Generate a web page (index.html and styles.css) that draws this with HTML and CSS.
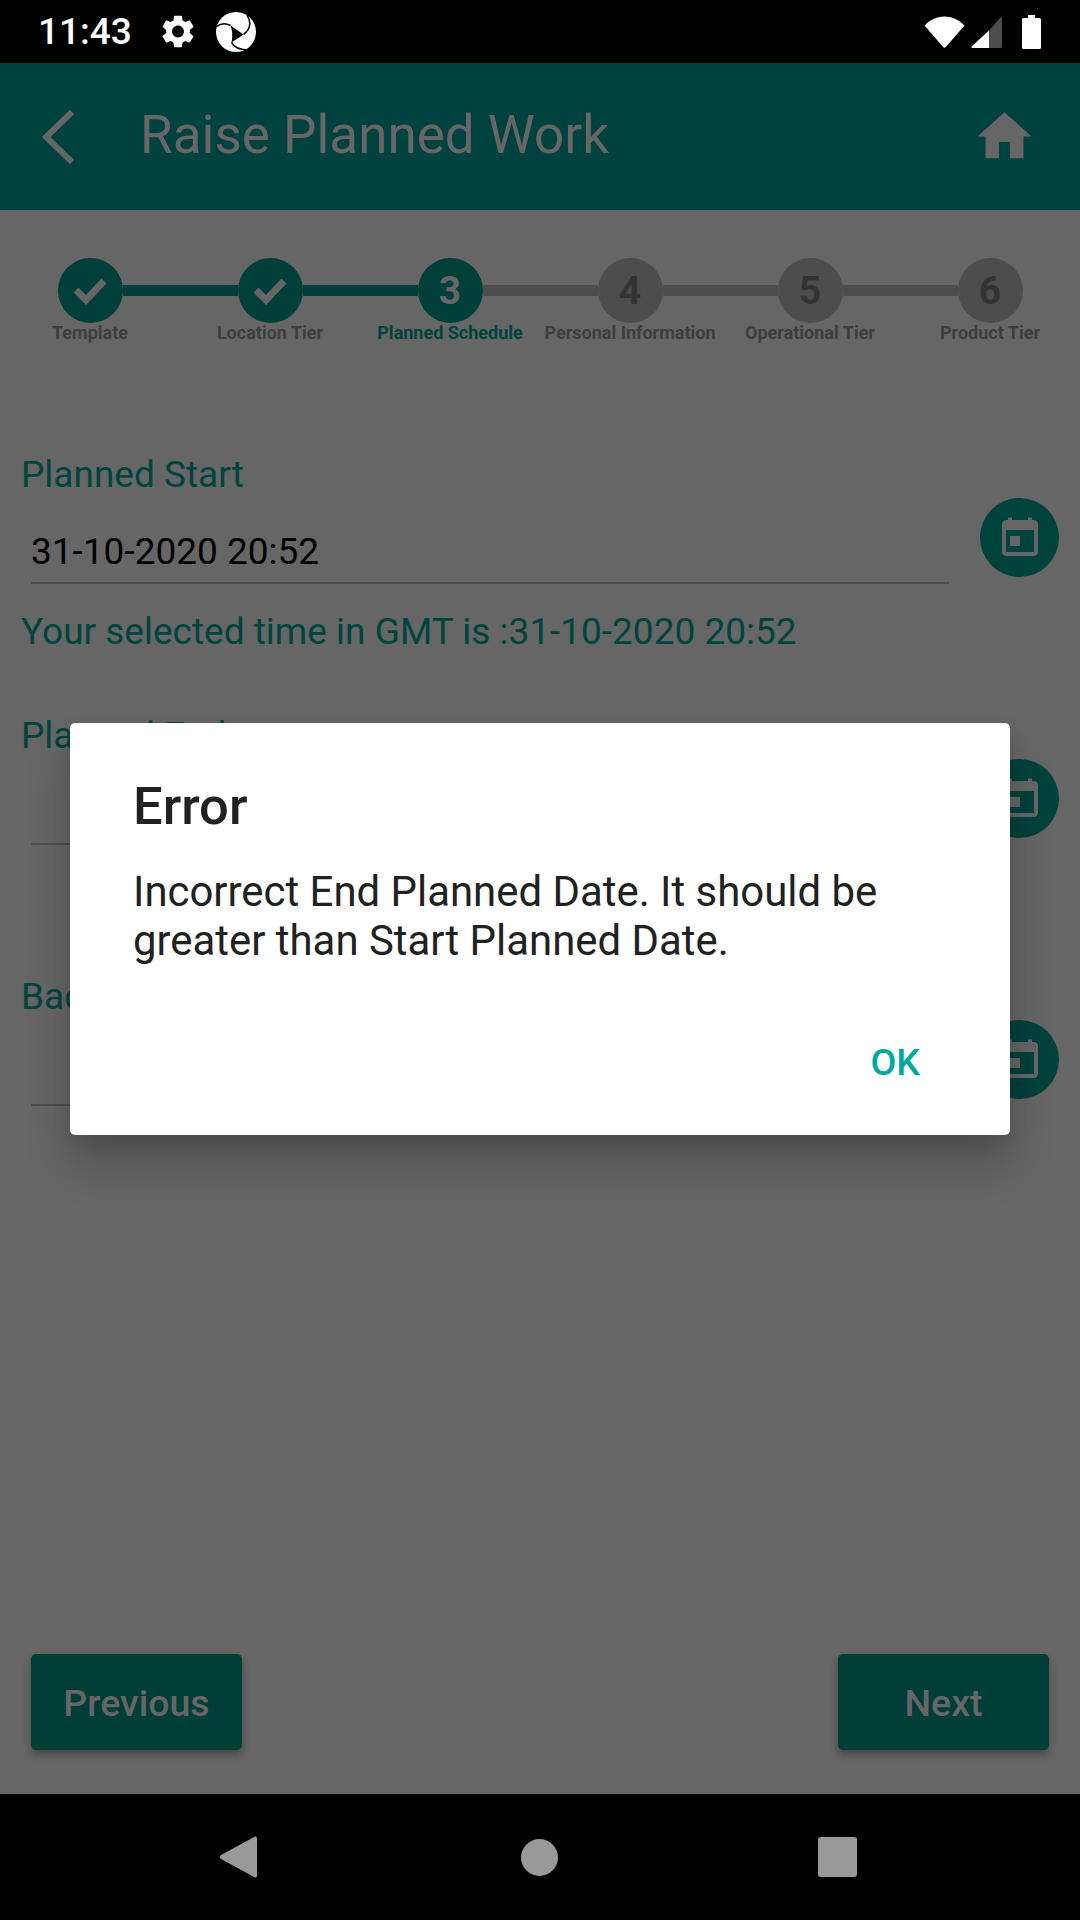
FILE: index.html
```html
<!DOCTYPE html>
<html>
<head>
  <meta charset="utf-8" />
  <title>Raise Planned Work</title>
  <link rel="stylesheet" href="styles.css">
</head>
<body>
<div class="phone">

  <!-- STATUS BAR -->
  <div class="status-bar">
    <span class="status-time">11:43</span>
    <svg class="status-gear" viewBox="2.4 2 19.2 20"><path fill-rule="evenodd" fill="#fff" d="M19.14 12.94c.04-.3.06-.61.06-.94 0-.32-.02-.64-.07-.94l2.03-1.58c.18-.14.23-.41.12-.61l-1.92-3.32c-.12-.22-.37-.29-.59-.22l-2.39.96c-.5-.38-1.03-.7-1.62-.94l-.36-2.54c-.04-.24-.24-.41-.48-.41h-3.84c-.24 0-.43.17-.47.41l-.36 2.54c-.59.24-1.13.57-1.62.94l-2.39-.96c-.22-.08-.47 0-.59.22L2.74 8.87c-.12.21-.08.47.12.61l2.03 1.58c-.05.3-.09.63-.09.94s.02.64.07.94l-2.03 1.58c-.18.14-.23.41-.12.61l1.92 3.32c.12.22.37.29.59.22l2.39-.96c.5.38 1.03.7 1.62.94l.36 2.54c.05.24.24.41.48.41h3.84c.24 0 .44-.17.47-.41l.36-2.54c.59-.24 1.13-.56 1.62-.94l2.39.96c.22.08.47 0 .59-.22l1.92-3.32c.12-.22.07-.47-.12-.61l-2.01-1.58zM12 15.6c-1.98 0-3.6-1.62-3.6-3.6s1.62-3.6 3.6-3.6 3.6 1.62 3.6 3.6-1.62 3.6-3.6 3.6z"/></svg>
    <svg class="status-logo" viewBox="0 0 40 40">
      <circle cx="20" cy="20" r="20" fill="#fff"/>
      <path fill="#000" d="M14.5 13.5L27.6 22.4L15.5 30.4Q17.5 21 14.5 13.5z"/>
      <path fill="none" stroke="#000" stroke-width="1.5" d="M0 15Q7 9.5 14.5 13.5M31 3Q38 14 27.6 22.4M15.5 30.4Q19 38 33 38"/>
    </svg>
    <span class="status-spacer"></span>
    <svg class="status-wifi" viewBox="0 0 41 32"><path fill="#fff" d="M0.5 9.5C12 -2.5 29 -2.5 40.5 9.5L21.8 31a1.7 1.7 0 0 1-2.6 0z"/></svg>
    <svg class="status-signal" viewBox="0 0 31 31">
      <path fill="#fff" d="M18 13.5V31H1.5a1 1 0 0 1-.7-1.7z"/>
      <path fill="#4d4d4d" d="M18 13.5L29.5.5a1 1 0 0 1 1.5.7V29.5a1.5 1.5 0 0 1-1.5 1.5H18z"/>
    </svg>
    <svg class="status-battery" viewBox="0 0 19 34"><path fill="#fff" d="M6 0h7v3h4.5a1.5 1.5 0 0 1 1.5 1.5V32.5a1.5 1.5 0 0 1-1.5 1.5H1.5A1.5 1.5 0 0 1 0 32.5V4.5A1.5 1.5 0 0 1 1.5 3H6z"/></svg>
  </div>

  <div class="screen">

    <!-- APP BAR -->
    <div class="app-bar">
      <svg class="app-bar-back" viewBox="0 0 32 54"><path fill="none" stroke="#666" stroke-width="6" d="M30 2L4 27l26 25"/></svg>
      <span class="app-bar-title">Raise Planned Work</span>
      <svg class="app-bar-home" viewBox="0 0 24 24"><path fill="#666" d="M10 20v-6h4v6h5v-8h3L12 3 2 12h3v8z"/></svg>
    </div>

    <!-- STEPPER -->
    <div class="stepper">
      <div class="step step-done">
        <div class="step-track">
          <span class="step-line step-line-none"></span>
          <span class="step-circle"><svg class="step-check" viewBox="0 0 34 28"><path fill="none" stroke="#666" stroke-width="7" d="M3 13l10 10L31 4"/></svg></span>
          <span class="step-line step-line-on"></span>
        </div>
        <span class="step-label">Template</span>
      </div>
      <div class="step step-done">
        <div class="step-track">
          <span class="step-line step-line-on"></span>
          <span class="step-circle"><svg class="step-check" viewBox="0 0 34 28"><path fill="none" stroke="#666" stroke-width="7" d="M3 13l10 10L31 4"/></svg></span>
          <span class="step-line step-line-on"></span>
        </div>
        <span class="step-label">Location Tier</span>
      </div>
      <div class="step step-current">
        <div class="step-track">
          <span class="step-line step-line-on"></span>
          <span class="step-circle">3</span>
          <span class="step-line"></span>
        </div>
        <span class="step-label">Planned Schedule</span>
      </div>
      <div class="step">
        <div class="step-track">
          <span class="step-line"></span>
          <span class="step-circle">4</span>
          <span class="step-line"></span>
        </div>
        <span class="step-label">Personal Information</span>
      </div>
      <div class="step">
        <div class="step-track">
          <span class="step-line"></span>
          <span class="step-circle">5</span>
          <span class="step-line"></span>
        </div>
        <span class="step-label">Operational Tier</span>
      </div>
      <div class="step">
        <div class="step-track">
          <span class="step-line"></span>
          <span class="step-circle">6</span>
          <span class="step-line step-line-none"></span>
        </div>
        <span class="step-label">Product Tier</span>
      </div>
    </div>

    <!-- DATE FIELDS -->
    <div class="form">
      <div class="field">
        <div class="field-label">Planned Start</div>
        <div class="field-row">
          <div class="field-input">31-10-2020 20:52</div>
          <span class="date-btn"><svg viewBox="0 0 24 24"><path fill="#666" d="M7 11h5v5H7zM16 1.7V3H8V1.7H6V3H5c-1.11 0-1.99.9-1.99 2L3 19c0 1.1.89 2 2 2h14c1.1 0 2-.9 2-2V5c0-1.1-.9-2-2-2h-1V1.7h-2zm3 17.3H5V8h14v11z"/></svg></span>
        </div>
        <div class="field-note">Your selected time in GMT is :31-10-2020 20:52</div>
      </div>
      <div class="field">
        <div class="field-label">Planned End</div>
        <div class="field-row">
          <div class="field-input"></div>
          <span class="date-btn"><svg viewBox="0 0 24 24"><path fill="#666" d="M7 11h5v5H7zM16 1.7V3H8V1.7H6V3H5c-1.11 0-1.99.9-1.99 2L3 19c0 1.1.89 2 2 2h14c1.1 0 2-.9 2-2V5c0-1.1-.9-2-2-2h-1V1.7h-2zm3 17.3H5V8h14v11z"/></svg></span>
        </div>
      </div>
      <div class="field">
        <div class="field-label">Backout Date</div>
        <div class="field-row">
          <div class="field-input"></div>
          <span class="date-btn"><svg viewBox="0 0 24 24"><path fill="#666" d="M7 11h5v5H7zM16 1.7V3H8V1.7H6V3H5c-1.11 0-1.99.9-1.99 2L3 19c0 1.1.89 2 2 2h14c1.1 0 2-.9 2-2V5c0-1.1-.9-2-2-2h-1V1.7h-2zm3 17.3H5V8h14v11z"/></svg></span>
        </div>
      </div>
    </div>

    <!-- FOOTER BUTTONS -->
    <div class="footer">
      <button class="nav-btn">Previous</button>
      <button class="nav-btn">Next</button>
    </div>

    <!-- ERROR DIALOG -->
    <div class="overlay">
      <div class="dialog">
        <div class="dialog-title">Error</div>
        <div class="dialog-message">Incorrect End Planned Date. It should be greater than Start Planned Date.</div>
        <div class="dialog-actions"><span class="dialog-ok">OK</span></div>
      </div>
    </div>

  </div>

  <!-- NAVIGATION BAR -->
  <div class="nav-bar">
    <svg class="nav-back" viewBox="0 0 37 42"><path fill="#999" d="M35 .5a1.5 1.5 0 0 1 2 1.5V40a1.5 1.5 0 0 1-2 1.5L1 23a2.5 2.5 0 0 1 0-4z"/></svg>
    <span class="nav-home"></span>
    <span class="nav-recent"></span>
  </div>

</div>
</body>
</html>
```

FILE: styles.css
```css
html, body {
  margin: 0;
  padding: 0;
  font-family: Roboto, sans-serif;
  box-sizing: border-box;
  background: #666;
}
*, *::before, *::after {
  box-sizing: inherit;
}

.phone {
  display: flex;
  flex-direction: column;
  width: 1080px;
  height: 1920px;
  overflow: hidden;
}

/* Status bar */
.status-bar {
  flex: 0 0 63px;
  display: flex;
  align-items: center;
  padding: 0 39px 0 38px;
  background: #000;
}
.status-time {
  width: 124px;
  font-size: 37px;
  font-weight: 500;
  color: #fff;
}
.status-gear {
  width: 32px;
  height: 33px;
  margin-right: 22px;
}
.status-logo {
  width: 40px;
  height: 40px;
}
.status-spacer {
  flex: 1 1 auto;
}
.status-wifi {
  width: 41px;
  height: 32px;
  margin-right: 6px;
}
.status-signal {
  width: 31px;
  height: 31px;
  margin-right: 20px;
  margin-top: 1px;
}
.status-battery {
  width: 19px;
  height: 34px;
}

.screen {
  flex: 1 1 auto;
  position: relative;
  display: flex;
  flex-direction: column;
}

/* App bar: colours here and below are as seen through the dialog's dim */
.app-bar {
  flex: 0 0 147px;
  display: flex;
  align-items: center;
  padding: 0 43px 0 42px;
  background: #00423f;
}
.app-bar-back {
  width: 32px;
  height: 54px;
  margin-right: 66px;
}
.app-bar-title {
  flex: 1 1 auto;
  margin-top: -3px;
  font-size: 53px;
  color: #666;
}
.app-bar-home {
  width: 65px;
  height: 65px;
}

/* Stepper */
.stepper {
  display: grid;
  grid-template-columns: repeat(6, 180px);
  padding-top: 48px;
}
.step {
  display: flex;
  flex-direction: column;
  align-items: center;
}
.step-track {
  display: flex;
  align-items: center;
  width: 100%;
}
.step-line {
  flex: 1 1 0;
  height: 11px;
  background: #4d4d4d;
}
.step-line-on {
  background: #003f3a;
}
.step-line-none {
  background: none;
}
.step-circle {
  flex: 0 0 65px;
  display: flex;
  align-items: center;
  justify-content: center;
  height: 65px;
  border-radius: 50%;
  background: #4d4d4d;
  color: #333;
  font-size: 39px;
  font-weight: 700;
}
.step-done .step-circle,
.step-current .step-circle {
  background: #003f3a;
  color: #666;
}
.step-check {
  width: 34px;
  height: 28px;
}
.step-label {
  font-size: 18px;
  font-weight: 700;
  line-height: 20px;
  white-space: nowrap;
  color: #3d3d3d;
}
.step-current .step-label {
  color: #00423f;
}

/* Date fields */
.form {
  padding: 110px 21px 0 21px;
}
.field {
  height: 261px;
}
.field-label,
.field-note {
  font-size: 37px;
  line-height: 44px;
  color: #00443f;
}
.field-row {
  display: flex;
  align-items: flex-start;
  height: 86px;
  margin-top: 1px;
}
.field-input {
  width: 918px;
  height: 86px;
  margin-left: 10px;
  padding-top: 32px;
  border-bottom: 2px solid #4d4d4d;
  font-size: 37px;
  line-height: 44px;
  color: #000;
}
.date-btn {
  display: flex;
  align-items: center;
  justify-content: center;
  width: 79px;
  height: 79px;
  margin-left: auto;
  border-radius: 50%;
  background: #00423c;
}
.date-btn svg {
  width: 48px;
  height: 48px;
}
.field-note {
  margin-top: 26px;
}

/* Footer */
.footer {
  display: flex;
  justify-content: space-between;
  margin-top: auto;
  padding: 0 31px 44px;
}
.nav-btn {
  width: 211px;
  height: 96px;
  padding: 2px 0 0;
  border: 0;
  border-radius: 5px;
  background: #003f38;
  color: #666;
  font-family: Roboto, sans-serif;
  font-size: 37.5px;
  font-weight: 500;
  box-shadow: 0 5px 8px rgba(0, 0, 0, 0.3);
}

/* Dialog */
.overlay {
  position: absolute;
  top: 0;
  right: 0;
  bottom: 0;
  left: 0;
  display: flex;
  align-items: center;
  justify-content: center;
}
.dialog {
  width: 940px;
  padding: 55px 60px 51px 63px;
  border-radius: 5px;
  background: #fff;
  box-shadow: 0 30px 45px rgba(0, 0, 0, 0.2), 0 10px 20px rgba(0, 0, 0, 0.1);
}
.dialog-title {
  font-size: 52.5px;
  font-weight: 500;
  line-height: 56px;
  color: #212121;
}
.dialog-message {
  margin-top: 33px;
  font-size: 41.9px;
  line-height: 49px;
  color: #212121;
}
.dialog-actions {
  display: flex;
  justify-content: flex-end;
  margin-top: 75px;
  padding-right: 30px;
}
.dialog-ok {
  font-size: 37.5px;
  font-weight: 500;
  line-height: 44px;
  color: #00a99d;
}

/* Navigation bar */
.nav-bar {
  flex: 0 0 126px;
  display: flex;
  align-items: center;
  padding: 0 0 0 220px;
  background: #000;
}
.nav-back {
  width: 37px;
  height: 42px;
  margin-right: 264px;
}
.nav-home {
  width: 37px;
  height: 37px;
  margin-right: 260px;
  border-radius: 50%;
  background: #999;
}
.nav-recent {
  width: 39px;
  height: 40px;
  border-radius: 3px;
  background: #999;
}
```
